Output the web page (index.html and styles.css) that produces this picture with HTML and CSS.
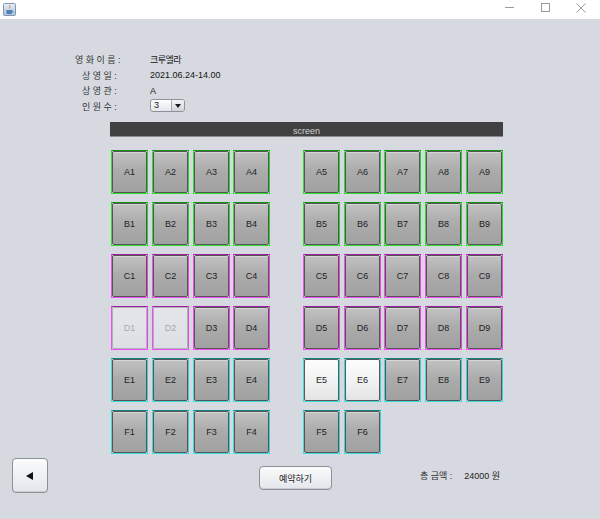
FILE: index.html
```html
<!DOCTYPE html>
<html lang="ko">
<head>
<meta charset="utf-8">
<title>좌석 예약</title>
<link rel="stylesheet" href="styles.css">
</head>
<body>
<div class="window">
  <div class="titlebar">
    <div class="app-icon">
      <svg width="13" height="13" viewBox="0 0 13 13">
        <defs>
          <linearGradient id="ig" x1="0" y1="0" x2="0" y2="1">
            <stop offset="0" stop-color="#e8f0fa"/>
            <stop offset="1" stop-color="#a9bfd8"/>
          </linearGradient>
        </defs>
        <rect x="0.5" y="0.5" width="12" height="12" rx="1" fill="url(#ig)" stroke="#7f95b3"/>
        <path d="M6.5 1.8 C5.2 3.4 7.6 4.2 6.2 6.2 C7.8 5.2 7.6 3.6 6.5 1.8 Z" fill="#e8762b"/>
        <path d="M3.4 7 H9 V9.4 C9 10.4 8.2 11 7.2 11 H5.2 C4.2 11 3.4 10.4 3.4 9.4 Z" fill="#4d7fb8"/>
        <path d="M9 7.6 C10.4 7.6 10.4 9.4 9 9.4" fill="none" stroke="#4d7fb8" stroke-width="0.8"/>
      </svg>
    </div>
    <div class="controls">
      <div class="ctrl"><span class="min"></span></div>
      <div class="ctrl"><span class="max"></span></div>
      <div class="ctrl">
        <svg width="10" height="10" viewBox="0 0 10 10"><path d="M0.5 0.5 L9.5 9.5 M9.5 0.5 L0.5 9.5" stroke="#9a9a9a" stroke-width="1"/></svg>
      </div>
    </div>
  </div>

  <div class="content">
    <div class="info">
      <div class="label wide">영 화 이 름 :</div><div class="value ko">크루엘라</div>
      <div class="label">상 영 일 :</div><div class="value">2021.06.24-14.00</div>
      <div class="label">상 영 관 :</div><div class="value">A</div>
      <div class="label">인 원 수 :</div>
      <div class="value">
        <div class="combo"><span class="combo-text">3</span><span class="combo-btn"><span class="tri"></span></span></div>
      </div>
    </div>

    <div class="screen">screen</div>

    <div class="seats">
      <div class="block left">
        <div class="seat g"><div class="face">A1</div></div>
        <div class="seat g"><div class="face">A2</div></div>
        <div class="seat g"><div class="face">A3</div></div>
        <div class="seat g"><div class="face">A4</div></div>
        <div class="seat g"><div class="face">B1</div></div>
        <div class="seat g"><div class="face">B2</div></div>
        <div class="seat g"><div class="face">B3</div></div>
        <div class="seat g"><div class="face">B4</div></div>
        <div class="seat m"><div class="face">C1</div></div>
        <div class="seat m"><div class="face">C2</div></div>
        <div class="seat m"><div class="face">C3</div></div>
        <div class="seat m"><div class="face">C4</div></div>
        <div class="seat m"><div class="face off">D1</div></div>
        <div class="seat m"><div class="face off">D2</div></div>
        <div class="seat m"><div class="face">D3</div></div>
        <div class="seat m"><div class="face">D4</div></div>
        <div class="seat c"><div class="face">E1</div></div>
        <div class="seat c"><div class="face">E2</div></div>
        <div class="seat c"><div class="face">E3</div></div>
        <div class="seat c"><div class="face">E4</div></div>
        <div class="seat c"><div class="face">F1</div></div>
        <div class="seat c"><div class="face">F2</div></div>
        <div class="seat c"><div class="face">F3</div></div>
        <div class="seat c"><div class="face">F4</div></div>
      </div>
      <div class="block right">
        <div class="seat g"><div class="face">A5</div></div>
        <div class="seat g"><div class="face">A6</div></div>
        <div class="seat g"><div class="face">A7</div></div>
        <div class="seat g"><div class="face">A8</div></div>
        <div class="seat g"><div class="face">A9</div></div>
        <div class="seat g"><div class="face">B5</div></div>
        <div class="seat g"><div class="face">B6</div></div>
        <div class="seat g"><div class="face">B7</div></div>
        <div class="seat g"><div class="face">B8</div></div>
        <div class="seat g"><div class="face">B9</div></div>
        <div class="seat m"><div class="face">C5</div></div>
        <div class="seat m"><div class="face">C6</div></div>
        <div class="seat m"><div class="face">C7</div></div>
        <div class="seat m"><div class="face">C8</div></div>
        <div class="seat m"><div class="face">C9</div></div>
        <div class="seat m"><div class="face">D5</div></div>
        <div class="seat m"><div class="face">D6</div></div>
        <div class="seat m"><div class="face">D7</div></div>
        <div class="seat m"><div class="face">D8</div></div>
        <div class="seat m"><div class="face">D9</div></div>
        <div class="seat c"><div class="face sel">E5</div></div>
        <div class="seat c"><div class="face sel">E6</div></div>
        <div class="seat c"><div class="face">E7</div></div>
        <div class="seat c"><div class="face">E8</div></div>
        <div class="seat c"><div class="face">E9</div></div>
        <div class="seat c"><div class="face">F5</div></div>
        <div class="seat c"><div class="face">F6</div></div>
      </div>
    </div>

    <div class="footer">
      <div class="btn back"><span class="back-tri"></span></div>
      <div class="btn reserve">예약하기</div>
      <div class="total"><span class="total-label">총 금액 :</span><span class="total-value">24000 원</span></div>
    </div>
  </div>
</div>
</body>
</html>
```

FILE: styles.css
```css
html, body {
  margin: 0;
  padding: 0;
}
body {
  width: 600px;
  height: 519px;
  overflow: hidden;
  background: #d6d9df;
  font-family: "Liberation Sans", "Noto Sans CJK KR", sans-serif;
  font-size: 9px;
  color: #1e1e1e;
}
.window {
  width: 600px;
  height: 519px;
  display: flex;
  flex-direction: column;
}
.titlebar {
  height: 19px;
  background: #ffffff;
  display: flex;
  align-items: center;
  justify-content: space-between;
  flex: none;
}
.app-icon {
  margin-left: 3px;
  width: 13px;
  height: 13px;
  margin-top: -1px;
}
.app-icon svg {
  display: block;
}
.controls {
  display: flex;
  margin-right: 1px;
  height: 19px;
}
.ctrl {
  width: 36px;
  height: 19px;
  display: flex;
  align-items: center;
  justify-content: center;
  padding-bottom: 4px;
  box-sizing: border-box;
}
.ctrl svg {
  display: block;
}
.min {
  display: block;
  width: 9px;
  height: 1px;
  background: #9a9a9a;
}
.max {
  display: block;
  width: 9px;
  height: 9px;
  box-sizing: border-box;
  border: 1px solid #9a9a9a;
}

.content {
  flex: 1;
}

.info {
  margin-top: 33px;
  height: 62px;
  display: grid;
  grid-template-columns: 150px auto;
  grid-auto-rows: 15.5px;
  align-items: center;
  color: #333;
}
.label {
  padding-left: 82px;
  white-space: pre;
}
.label.wide {
  padding-left: 75px;
}
.value {
  color: #151515;
  white-space: nowrap;
}
.value.ko {
  letter-spacing: -0.5px;
}
.combo {
  width: 35px;
  height: 13px;
  box-sizing: border-box;
  border: 1px solid #8e939b;
  border-radius: 3px;
  background: linear-gradient(#ffffff, #e2e5ea);
  display: flex;
  align-items: stretch;
  margin-top: -1px;
}
.combo-text {
  flex: 1;
  padding-left: 3px;
  line-height: 11px;
  font-size: 9px;
}
.combo-btn {
  width: 12px;
  border-left: 1px solid #a7abb3;
  background: linear-gradient(#f3f5f8, #cfd3da);
  border-radius: 0 2px 2px 0;
  display: flex;
  align-items: center;
  justify-content: center;
}
.tri {
  width: 0;
  height: 0;
  border-left: 3px solid transparent;
  border-right: 3px solid transparent;
  border-top: 4px solid #1a1a1a;
}

.screen {
  margin: 8px 0 0 110px;
  width: 393px;
  height: 15px;
  box-sizing: border-box;
  background: #414141;
  border-bottom: 1px solid #8a8a8a;
  color: #d2d2d2;
  text-align: center;
  padding-top: 4px;
  line-height: 11px;
  font-size: 9px;
}

.seats {
  margin: 13px 0 0 111px;
  display: flex;
  align-items: flex-start;
  gap: 33px;
}
.block {
  display: grid;
  grid-auto-rows: 44px;
  row-gap: 8px;
}
.block.left {
  grid-template-columns: 41px 41px 40px 37px;
}
.block.right {
  grid-template-columns: 41px 40px 41px 41px 37px;
}
.seat {
  width: 37px;
  box-sizing: border-box;
  border: 1px solid;
}
.seat.g {
  border-color: #179417 #28d428 #2de02d #2de02d;
}
.seat.m {
  border-color: #a01ca0 #ec42ec #f44cf4 #f44cf4;
}
.seat.c {
  border-color: #138585 #36d4d4 #3ddcdc #3ddcdc;
}
.face {
  height: 100%;
  box-sizing: border-box;
  border: 1px solid #555;
  border-radius: 2px;
  background: linear-gradient(#c2c2c2 0%, #acacac 45%, #a1a1a1 100%);
  box-shadow: inset 0 1px 0 rgba(255,255,255,0.35);
  display: flex;
  align-items: center;
  justify-content: center;
  color: #1e1e1e;
  font-size: 9px;
}
.face.off {
  border-color: #aeb1b8;
  background: linear-gradient(#e4e6ea, #dcdfe4);
  color: #a6a9af;
  box-shadow: none;
}
.face.sel {
  border-color: #5a5a5a;
  background: linear-gradient(#fdfdfd 0%, #f3f3f3 50%, #e4e4e4 100%);
}

.footer {
  padding-top: 4px;
  display: flex;
  align-items: flex-start;
}
.btn {
  box-sizing: border-box;
  border: 1px solid #8c9097;
  border-radius: 4px;
  background: linear-gradient(#fbfbfc 0%, #eef0f3 55%, #e2e5ea 100%);
  box-shadow: inset 0 -1px 0 #c9ccd2;
  display: flex;
  align-items: center;
  justify-content: center;
}
.back {
  margin-left: 12px;
  width: 36px;
  height: 35px;
}
.back-tri {
  width: 0;
  height: 0;
  border-top: 4px solid transparent;
  border-bottom: 4px solid transparent;
  border-right: 7px solid #111;
  margin-right: 2px;
}
.reserve {
  margin-left: 211px;
  margin-top: 8px;
  width: 73px;
  height: 24px;
  color: #222;
  font-size: 9px;
}
.total {
  margin-left: 88px;
  margin-top: 12px;
  line-height: 12px;
  display: flex;
  color: #222;
}
.total-label {
  color: #333;
}
.total-value {
  margin-left: 12px;
}
```
